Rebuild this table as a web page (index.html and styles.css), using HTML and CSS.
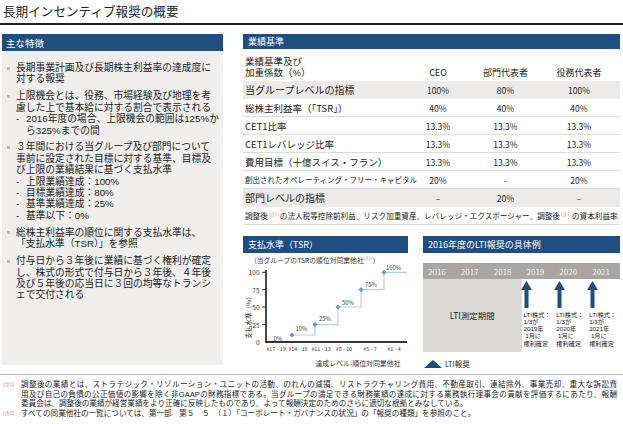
FILE: index.html
```html
<!DOCTYPE html>
<html lang="ja">
<head>
<meta charset="utf-8">
<title>長期インセンティブ報奨の概要</title>
<link rel="stylesheet" href="styles.css">
</head>
<body>
<h1 class="title">長期インセンティブ報奨の概要</h1>
<div class="main">
  <section class="left">
    <div class="bar bar-l">主な特徴</div>
    <div class="lbox">
      <div class="item"><div>長期事業計画及び長期株主利益率の達成度に<br>対する報奨</div></div>
      <div class="item"><div>上限機会とは、役務、市場経験及び地理を考<br>慮した上で基本給に対する割合で表示される<div class="sub"><span class="d">-</span>2016年度の場合、上限機会の範囲は125%か<br>ら325%までの間</div></div></div>
      <div class="item"><div>３年間における当グループ及び部門について<br>事前に設定された目標に対する基準、目標及<br>び上限の業績結果に基づく支払水準<div class="sub"><span class="d">-</span>上限業績達成：100%</div><div class="sub"><span class="d">-</span>目標業績達成：80%</div><div class="sub"><span class="d">-</span>基準業績達成：25%</div><div class="sub"><span class="d">-</span>基準以下：0%</div></div></div>
      <div class="item"><div>総株主利益率の順位に関する支払水準は、<br>「支払水準（TSR）」を参照</div></div>
      <div class="item"><div>付与日から３年後に業績に基づく権利が確定<br>し、株式の形式で付与日から３年後、４年後<br>及び５年後の応当日に３回の均等なトランシ<br>ェで交付される</div></div>
    </div>
  </section>

  <section class="right">
    <div class="bar bar-r">業績基準</div>
    <div class="thead"><div class="lab">業績基準及び<br>加重係数（%）</div><div class="v">CEO</div><div class="v">部門代表者</div><div class="v">役務代表者</div></div>
    <div class="trow g big"><div class="lab">当グループレベルの指標</div><div class="v">100%</div><div class="v">80%</div><div class="v">100%</div></div>
    <div class="trow"><div class="lab">総株主利益率（「TSR」）</div><div class="v">40%</div><div class="v">40%</div><div class="v">40%</div></div>
    <div class="trow"><div class="lab">CET1比率</div><div class="v">13.3%</div><div class="v">13.3%</div><div class="v">13.3%</div></div>
    <div class="trow"><div class="lab">CET1レバレッジ比率</div><div class="v">13.3%</div><div class="v">13.3%</div><div class="v">13.3%</div></div>
    <div class="trow"><div class="lab">費用目標（十億スイス・フラン）</div><div class="v">13.3%</div><div class="v">13.3%</div><div class="v">13.3%</div></div>
    <div class="trow"><div class="lab small">創出されたオペレーティング・フリー・キャピタル</div><div class="v">20%</div><div class="v">-</div><div class="v">20%</div></div>
    <div class="trow g big"><div class="lab">部門レベルの指標</div><div class="v">–</div><div class="v">20%</div><div class="v">–</div></div>
    <div class="trow"><div class="full">調整後<span class="note">(注1)</span>の法人税等控除前利益、リスク加重資産、レバレッジ・エクスポージャー、調整後<span class="note">(注1)</span>の資本利益率</div></div>

    <div class="lower">
      <div class="chart">
        <div class="bar bar-s">支払水準（TSR）</div>
        <svg class="tsr" width="165" height="114" viewBox="0 0 165 114">
          <text class="st" x="7" y="6.5" dominant-baseline="central">（当グループのTSRの順位対同業他社<tspan class="stn" dy="-2">(注2)</tspan><tspan dy="2">）</tspan></text>
          <text class="yt" transform="translate(5,63) rotate(-90)" text-anchor="middle" dominant-baseline="central">支払水準（%）</text>
          <g class="yl" text-anchor="end">
            <text x="16.5" y="19.3" dominant-baseline="central">100</text>
            <text x="16.5" y="36.7" dominant-baseline="central">75</text>
            <text x="16.5" y="54" dominant-baseline="central">50</text>
            <text x="16.5" y="71.6" dominant-baseline="central">25</text>
            <text x="16.5" y="89" dominant-baseline="central">0</text>
          </g>
          <path d="M19 19.3H23M19 36.7H23M19 54H23M19 71.6H23" stroke="#333" stroke-width="1"/>
          <path d="M49 82H72V71.6H95V54H118V36.7H141V19.3H164" fill="none" stroke="#b4cfe5" stroke-width="1.2"/>
          <path d="M23 17V89H164" fill="none" stroke="#333" stroke-width="1.8"/>
          <g fill="#6a99c4">
            <path d="M49 79.4L51.6 82L49 84.6L46.4 82Z"/>
            <path d="M72 69L74.6 71.6L72 74.2L69.4 71.6Z"/>
            <path d="M95 51.4L97.6 54L95 56.6L92.4 54Z"/>
            <path d="M118 34.1L120.6 36.7L118 39.3L115.4 36.7Z"/>
            <path d="M141 16.7L143.6 19.3L141 21.9L138.4 19.3Z"/>
          </g>
          <g class="pl" text-anchor="middle">
            <text x="35" y="85" dominant-baseline="central">0%</text>
            <text x="58.5" y="75.5" dominant-baseline="central">10%</text>
            <text x="82" y="65.5" dominant-baseline="central">25%</text>
            <text x="105" y="49" dominant-baseline="central">50%</text>
            <text x="128" y="31.5" dominant-baseline="central">75%</text>
            <text x="150.5" y="14.7" dominant-baseline="central">100%</text>
          </g>
          <g class="xl" text-anchor="middle">
            <text x="33" y="96" dominant-baseline="central">#17 - 19</text>
            <text x="55" y="96" dominant-baseline="central">#14 - 16</text>
            <text x="78" y="96" dominant-baseline="central">#11 - 13</text>
            <text x="101" y="96" dominant-baseline="central">#8 - 10</text>
            <text x="127" y="96" dominant-baseline="central">#5 - 7</text>
            <text x="151" y="96" dominant-baseline="central">#1 - 4</text>
          </g>
          <text class="xt" x="115" y="110" text-anchor="middle" dominant-baseline="central">達成レベル-順位対同業他社</text>
        </svg>
      </div>
      <div class="lti">
        <div class="bar bar-s">2016年度のLTI報奨の具体例</div>
        <div class="years"><span>2016</span><span>2017</span><span>2018</span><span>2019</span><span>2020</span><span>2021</span></div>
        <div class="lbody">
          <div class="period">LTI測定期間</div>
          <div class="vest">
            <svg class="arr" width="11" height="27" viewBox="0 0 11 27"><path d="M5.5 0L11 9H7.5V27H3.5V9H0Z" fill="#1f4e7c"/></svg>
            <div class="vt">LTI株式：<br>1/3が<br>2019年<br>&nbsp;1月に<br>権利確定</div>
          </div>
          <div class="vest">
            <svg class="arr" width="11" height="27" viewBox="0 0 11 27"><path d="M5.5 0L11 9H7.5V27H3.5V9H0Z" fill="#1f4e7c"/></svg>
            <div class="vt">LTI株式：<br>1/3が<br>2020年<br>&nbsp;1月に<br>権利確定</div>
          </div>
          <div class="vest">
            <svg class="arr" width="11" height="27" viewBox="0 0 11 27"><path d="M5.5 0L11 9H7.5V27H3.5V9H0Z" fill="#1f4e7c"/></svg>
            <div class="vt">LTI株式：<br>1/3が<br>2021年<br>&nbsp;1月に<br>権利確定</div>
          </div>
        </div>
        <div class="legend"><svg width="18" height="8" viewBox="0 0 18 8"><path d="M9 0L18 8H0Z" fill="#1f4e7c"/></svg><span>LTI報奨</span></div>
      </div>
    </div>
  </section>
</div>

<footer class="foot">
  <div class="fn"><span class="mk">(注1)</span><div class="ft"><span class="jl">調整後の業績とは、ストラテジック・リゾルーション・ユニットの活動、のれんの減損、リストラクチャリング費用、不動産取引、連結除外、事業売却、重大な訴訟費</span><span class="jl">用及び自己の負債の公正価値の影響を除く非GAAPの財務指標である。当グループの満足できる財務業績の達成に対する業務執行理事会の貢献を評価するにあたり、報酬</span><span class="ln">委員会は、調整後の業績が経営業績をより正確に反映したものであり、よって報酬決定のためのさらに適切な根拠とみなしている。</span></div></div>
  <div class="fn"><span class="mk">(注2)</span><div class="ft"><span class="ln">すべての同業他社の一覧については、第一部　第５　５　（１）「コーポレート・ガバナンスの状況」の「報奨の種類」を参照のこと。</span></div></div>
</footer>
</body>
</html>
```

FILE: styles.css
```css
* { box-sizing: border-box; margin: 0; padding: 0; }

body {
  margin: 0;
  width: 623px;
  height: 424px;
  overflow: hidden;
  background: #fff;
  color: #222;
  font-family: "Noto Sans CJK JP", "Noto Sans", sans-serif;
}

.title {
  height: 25px;
  border-bottom: 2px solid #222;
  font-size: 12.6px;
  font-weight: 400;
  line-height: 21px;
  padding-left: 3px;
}

.main {
  display: grid;
  grid-template-columns: 221px 377px;
  column-gap: 20px;
  height: 349px;
  padding: 9px 0 0 2px;
}

.bar {
  background: #1f4e82;
  color: #fff;
  display: flex;
  align-items: center;
  font-size: 9px;
  white-space: nowrap;
}

.bar-l { height: 17px; padding-left: 4px; font-size: 9.5px; }
.bar-r { height: 15px; padding-left: 5px; }
.bar-s { height: 17px; padding-left: 5px; }

/* left panel */
.lbox {
  background: #f0efed;
  height: 314px;
  padding: 11px 0 0 5px;
}

.item {
  display: flex;
  font-family: "Liberation Sans", "Noto Sans CJK JP", sans-serif;
  font-size: 9.75px;
  line-height: 11.4px;
  white-space: nowrap;
  margin-bottom: 5.5px;
}

.item::before {
  content: "";
  flex: none;
  width: 3px;
  height: 3px;
  background: #bcbcbc;
  margin: 4.5px 6px 0 0;
}

.sub { padding-left: 10px; }
.sub .d { display: inline-block; width: 10px; margin-left: -10px; }

/* table */
.thead,
.trow {
  display: grid;
  grid-template-columns: 160px 70px 65px 1fr;
  white-space: nowrap;
}

.thead {
  height: 32px;
  align-items: end;
  padding-bottom: 3px;
  font-size: 9.5px;
  line-height: 11px;
}

.thead .lab { font-family: "Liberation Sans", "Noto Sans CJK JP", sans-serif; }
.thead .v { font-size: 9px; }

.lab { padding-left: 2px; }
.v { text-align: center; }

.trow {
  height: 18px;
  align-items: center;
  border-bottom: 1px solid #dcdcdc;
  font-size: 9.5px;
}

.trow .v { font-size: 8.5px; }
.trow.g { background: #ecebea; border-bottom-color: #ecebea; }
.trow.big .lab { font-size: 10px; }
.lab.small { font-size: 7.5px; }

.full {
  grid-column: 1 / -1;
  padding-left: 2px;
  font-size: 7.6px;
}

.note {
  font-size: 4.5px;
  color: #e08a8a;
  vertical-align: 3px;
  margin: 0 1px;
}

/* lower panels */
.lower {
  display: flex;
  gap: 15px;
  margin-top: 11px;
}

.chart { width: 165px; flex: none; }
.lti { width: 197px; flex: none; }

.tsr { display: block; }
.tsr text { font-family: "Noto Sans CJK JP", "Noto Sans", sans-serif; fill: #333; }
.tsr .st { font-size: 6.8px; }
.tsr .stn { font-size: 4px; fill: #e08a8a; }
.tsr .yt { font-size: 6.6px; }
.tsr .yl text { font-size: 6.5px; }
.tsr .pl text { font-size: 5.8px; fill: #444; }
.tsr .xl text { font-size: 5.4px; fill: #444; }
.tsr .xt { font-size: 6.9px; }

.years {
  margin-top: 10px;
  height: 16px;
  display: grid;
  grid-template-columns: repeat(6, 1fr);
  align-items: center;
  justify-items: center;
  background: #aaa5a0;
  color: #f3f3f3;
  font-size: 8px;
}

.years span { padding-right: 5px; }

.lbody {
  display: grid;
  grid-template-columns: repeat(6, 1fr);
  height: 73px;
}

.period {
  grid-column: span 3;
  background: #dcdad7;
  display: flex;
  align-items: center;
  justify-content: center;
  font-size: 8.5px;
  padding-bottom: 1px;
}

.vest {
  padding: 2px 0 0 2px;
  white-space: nowrap;
}

.arr { display: block; margin-left: -2.5px; }

.vt {
  margin-top: 2.5px;
  font-family: "Liberation Sans", "Noto Sans CJK JP", sans-serif;
  font-size: 6.2px;
  line-height: 7.3px;
}

.legend {
  display: flex;
  align-items: center;
  gap: 3px;
  margin-top: 7px;
  padding-left: 1px;
  font-size: 7.5px;
  line-height: 9px;
}

.legend svg { display: block; }

/* footnotes */
.foot {
  border-top: 1px solid #b5b5b5;
  padding: 5px 6px 0 3px;
  font-family: "Liberation Sans", "Noto Sans CJK JP", sans-serif;
  font-size: 7.6px;
  line-height: 9.7px;
}

.fn {
  display: grid;
  grid-template-columns: 18px 1fr;
}

.mk {
  font-size: 5px;
  line-height: 8px;
  color: #e08a8a;
}

.ft .jl {
  display: block;
  text-align: justify;
  text-align-last: justify;
}

.ft .ln { display: block; white-space: nowrap; }
```
